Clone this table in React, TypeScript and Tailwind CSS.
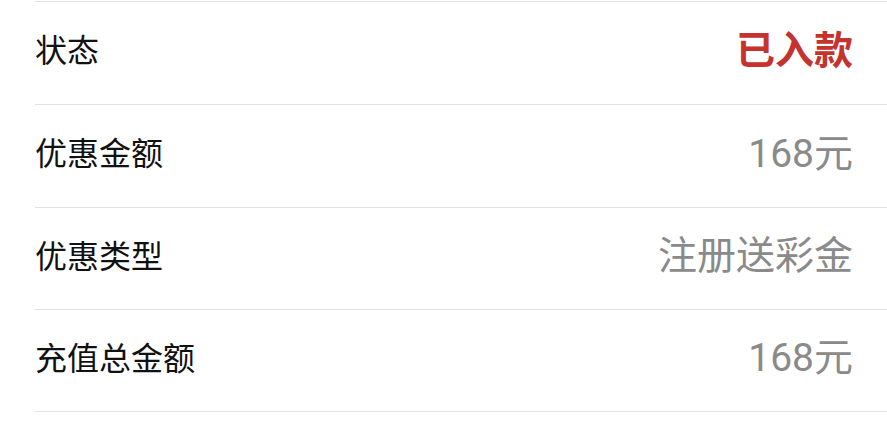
const rows = [
  { label: "状态", value: "已入款", highlight: true, h: "h-[103px]" },
  { label: "优惠金额", value: "168元", h: "h-[103px]" },
  { label: "优惠类型", value: "注册送彩金", h: "h-[102px]" },
  { label: "充值总金额", value: "168元", h: "h-[102px]" },
];

export default function App() {
  return (
    <div
      className="min-h-screen bg-white pt-px pl-[35px]"
      style={{ fontFamily: 'Roboto, "Noto Sans CJK SC", sans-serif' }}
    >
      <div className="border-t border-[#e2e2e2]">
        {rows.map((row) => (
          <div
            key={row.label}
            className={`${row.h} flex items-center justify-between border-b border-[#e2e2e2] pr-[34px] pb-[4px]`}
          >
            <span className="text-[32px] leading-none text-[#111]">{row.label}</span>
            <span
              className={
                row.highlight
                  ? "text-[39px] leading-none font-bold text-[#c4332d]"
                  : "text-[39px] leading-none text-[#8a8a8a]"
              }
            >
              {row.value}
            </span>
          </div>
        ))}
      </div>
    </div>
  );
}
